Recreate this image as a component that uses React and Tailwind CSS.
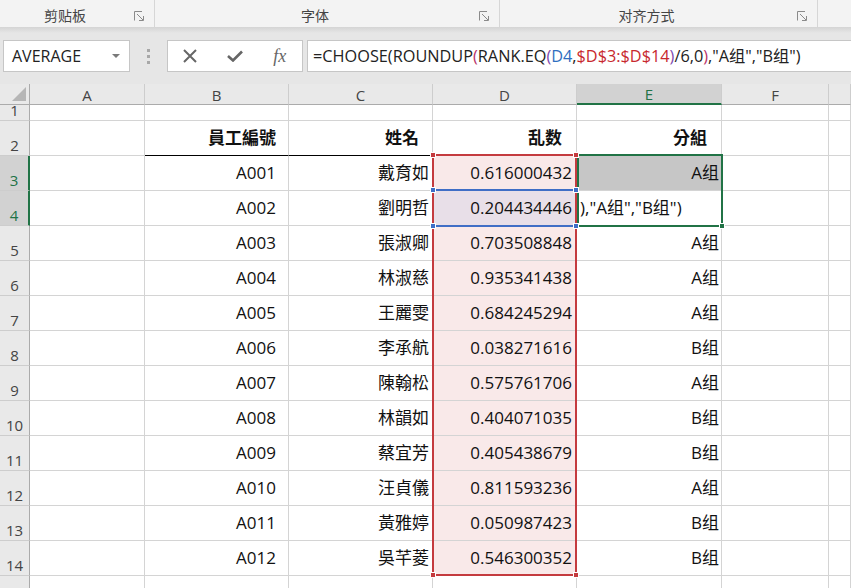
import React from 'react';

const data = [
  ['A001', '戴育如', '0.616000432', 'A组'],
  ['A002', '劉明哲', '0.204434446', null],
  ['A003', '張淑卿', '0.703508848', 'A组'],
  ['A004', '林淑慈', '0.935341438', 'A组'],
  ['A005', '王麗雯', '0.684245294', 'A组'],
  ['A006', '李承航', '0.038271616', 'B组'],
  ['A007', '陳翰松', '0.575761706', 'A组'],
  ['A008', '林韻如', '0.404071035', 'B组'],
  ['A009', '蔡宜芳', '0.405438679', 'B组'],
  ['A010', '汪貞儀', '0.811593236', 'A组'],
  ['A011', '黃雅婷', '0.050987423', 'B组'],
  ['A012', '吳芊菱', '0.546300352', 'B组'],
];

const cellBase =
  'flex items-end overflow-hidden whitespace-nowrap border-r border-b border-[#d4d4d4] text-[17px] leading-[20px] pb-[7px] text-[#111]';

function Launcher() {
  return (
    <svg width="10" height="10" viewBox="0 0 10 10" fill="none" stroke="#8a8a8a" strokeWidth="1">
      <path d="M0.5 9.5V0.5H8" />
      <path d="M3 3L9 9" />
      <path d="M5 9.5H9.5V5" />
    </svg>
  );
}

function RibbonGroup({ label, width, last }) {
  return (
    <div className={`flex h-full ${width} ${last ? '' : 'border-r border-[#d6d6d6]'}`}>
      <div className="flex-1 flex items-center justify-center pt-[3px] pr-[4px] text-[14px] text-[#444]">{label}</div>
      <div className="w-[20px] flex items-end pb-[6px]">
        {!last && <Launcher />}
      </div>
    </div>
  );
}

function ColHead({ label, active }) {
  return (
    <div
      className={`flex items-center justify-center pt-[2px] text-[15px] leading-none border-r border-r-[#cdcdcd] ${
        active
          ? 'bg-[#d2d2d2] text-[#217346] border-b-2 border-b-[#217346]'
          : 'bg-[#e9e9e9] text-[#444] border-b border-b-[#ababab]'
      }`}
    >
      {label}
    </div>
  );
}

function RowHead({ n, active }) {
  return (
    <div
      className={`flex items-end justify-center overflow-hidden text-[15px] leading-[18px] pb-[1px] border-b border-b-[#cdcdcd] ${
        active
          ? 'bg-[#d2d2d2] text-[#217346] border-r-2 border-r-[#217346]'
          : 'bg-[#e9e9e9] text-[#444] border-r border-r-[#ababab]'
      }`}
    >
      {n}
    </div>
  );
}

function Handle({ x, y, color }) {
  return (
    <div
      className="absolute w-[6px] h-[6px] border border-white"
      style={{ left: x - 3, top: y - 3, background: color }}
    />
  );
}

export default function App() {
  return (
    <div className="w-[851px] h-[588px] overflow-hidden bg-white font-['Open_Sans','Noto_Sans_CJK_TC',sans-serif]">
      {/* ribbon group labels */}
      <div className="h-[27px] bg-[#f3f3f3] flex font-['Noto_Sans_CJK_SC',sans-serif]">
        <RibbonGroup label="剪贴板" width="w-[155px]" />
        <RibbonGroup label="字体" width="w-[345px]" />
        <RibbonGroup label="对齐方式" width="w-[318px]" />
        <RibbonGroup label="" width="flex-1" last />
      </div>

      {/* formula bar */}
      <div className="h-[57px] bg-[#e6e6e6] flex flex-col">
        <div className="h-[6px] bg-gradient-to-b from-[#d4d4d4] to-[#e6e6e6]" />
        <div className="mt-[7px] h-[32px] flex">
          <div className="ml-[3px] w-[127px] bg-white border border-[#c6c6c6] flex items-center justify-between pl-[8px] pr-[9px] text-[16px] text-[#222]">
            <span>AVERAGE</span>
            <span className="w-0 h-0 border-x-[4px] border-x-transparent border-t-[4px] border-t-[#7a7a7a]" />
          </div>
          <div className="w-[37px] flex flex-col items-center justify-center gap-[3px]">
            <span className="w-[3px] h-[3px] bg-[#a8a8a8]" />
            <span className="w-[3px] h-[3px] bg-[#a8a8a8]" />
            <span className="w-[3px] h-[3px] bg-[#a8a8a8]" />
          </div>
          <div className="w-[136px] bg-white border border-[#c6c6c6] flex">
            <div className="w-[45px] flex items-center justify-center">
              <svg width="14" height="14" viewBox="0 0 14 14" stroke="#666" strokeWidth="2">
                <path d="M1 1L13 13M13 1L1 13" />
              </svg>
            </div>
            <div className="w-[45px] flex items-center justify-center">
              <svg width="16" height="12" viewBox="0 0 16 12" fill="none" stroke="#666" strokeWidth="2.6">
                <path d="M1 6L6 10.5L15 1.5" />
              </svg>
            </div>
            <div className="w-[45px] flex items-center justify-center font-['Liberation_Serif',serif] italic text-[18px] text-[#666]">
              fx
            </div>
          </div>
          <div className="ml-[4px] flex-1 bg-white border border-[#c6c6c6] border-r-0 flex items-center pl-[5px] text-[16.3px] text-[#222] whitespace-nowrap">
            <span>=CHOOSE(ROUNDUP</span>
            <span className="text-[#b8336a]">(</span>
            <span>RANK.EQ</span>
            <span className="text-[#7e4bb0]">(</span>
            <span className="text-[#2f6fc0]">D4</span>
            <span>,</span>
            <span className="text-[#c8282e]">$D$3:$D$14</span>
            <span className="text-[#7e4bb0]">)</span>
            <span>/6,0</span>
            <span className="text-[#b8336a]">)</span>
            <span>,"A组","B组")</span>
          </div>
        </div>
      </div>

      {/* sheet */}
      <div className="relative grid grid-cols-[30px_115px_144px_144px_144px_145px_107px_1fr] grid-rows-[21px_16px_35px_repeat(13,35px)]">
        <div className="relative bg-[#e9e9e9] border-r border-r-[#ababab] border-b border-b-[#ababab]">
          <svg className="absolute right-[3px] bottom-[3px]" width="14" height="14" viewBox="0 0 14 14">
            <polygon points="14,0 14,14 0,14" fill="#b6b6b6" />
          </svg>
        </div>
        <ColHead label="A" />
        <ColHead label="B" />
        <ColHead label="C" />
        <ColHead label="D" />
        <ColHead label="E" active />
        <ColHead label="F" />
        <ColHead label="" />

        {/* row 1 */}
        <RowHead n="1" />
        <div className={cellBase} />
        <div className={cellBase} />
        <div className={cellBase} />
        <div className={cellBase} />
        <div className={cellBase} />
        <div className={cellBase} />
        <div className={cellBase} />

        {/* row 2 */}
        <RowHead n="2" />
        <div className={cellBase} />
        <div className={`${cellBase} justify-end pr-[12px] font-bold border-b-black`}>員工編號</div>
        <div className={`${cellBase} justify-end pr-[13px] font-bold border-b-black`}>姓名</div>
        <div className={`${cellBase} justify-end pr-[14px] font-bold border-b-black`}>乱数</div>
        <div className={`${cellBase} justify-end pr-[14px] font-bold border-b-black`}>分組</div>
        <div className={cellBase} />
        <div className={cellBase} />

        {data.map((r, i) => {
          const row = i + 3;
          const editing = r[3] === null;
          return (
            <React.Fragment key={r[0]}>
              <RowHead n={row} active={row === 3 || row === 4} />
              <div className={cellBase} />
              <div className={`${cellBase} justify-end pr-[12px]`}>{r[0]}</div>
              <div className={`${cellBase} justify-end pr-[3px]`}>{r[1]}</div>
              <div className={`${cellBase} justify-end pr-[4px] ${editing ? 'bg-[#e8dfe8]' : 'bg-[#f9e9e9]'}`}>{r[2]}</div>
              {editing ? (
                <div className={`${cellBase} justify-start pl-[3px]`}>),"A组","B组")</div>
              ) : (
                <div className={`${cellBase} justify-end pr-[2px] ${row === 3 ? 'bg-[#c6c6c6]' : ''}`}>{r[3]}</div>
              )}
              <div className={cellBase} />
              <div className={cellBase} />
            </React.Fragment>
          );
        })}

        {/* row 15 */}
        <RowHead n="15" />
        <div className={cellBase} />
        <div className={cellBase} />
        <div className={cellBase} />
        <div className={cellBase} />
        <div className={cellBase} />
        <div className={cellBase} />
        <div className={cellBase} />

        {/* reference highlight for D4 */}
        <div className="absolute left-[432px] top-[105px] w-[145px] h-[38px] border-2 border-[#3f6ec6]" />
        {/* range highlight D3:D14 */}
        <div className="absolute left-[432px] top-[70px] w-[145px] h-[422px] border-2 border-[#c43b3f]" />
        {/* active selection E3:E4 */}
        <div className="absolute left-[577px] top-[70px] w-[146px] h-[73px] border-2 border-[#217346]" />

        <Handle x={433} y={71} color="#c43b3f" />
        <Handle x={576} y={71} color="#c43b3f" />
        <Handle x={433} y={491} color="#c43b3f" />
        <Handle x={576} y={491} color="#c43b3f" />
        <Handle x={433} y={106} color="#3f6ec6" />
        <Handle x={576} y={106} color="#3f6ec6" />
        <Handle x={433} y={142} color="#3f6ec6" />
        <Handle x={576} y={142} color="#3f6ec6" />
        <Handle x={722} y={142} color="#217346" />
      </div>
    </div>
  );
}
